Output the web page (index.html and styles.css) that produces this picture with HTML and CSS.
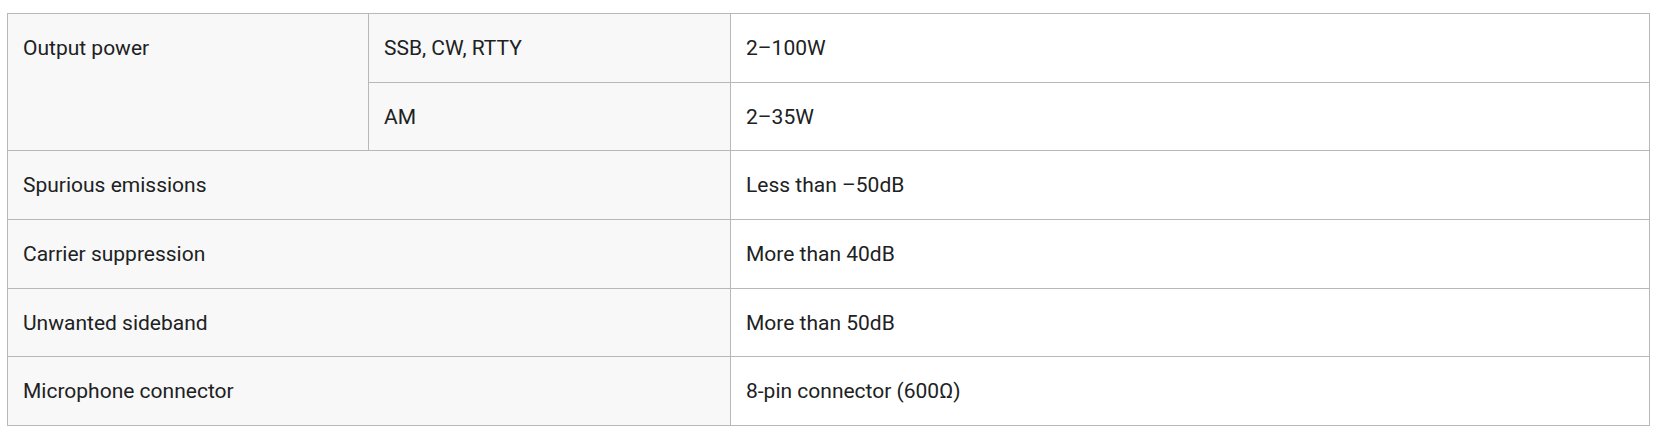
FILE: index.html
```html
<!DOCTYPE html>
<html lang="en">
<head>
<meta charset="utf-8">
<title>Specifications</title>
<link rel="stylesheet" href="styles.css">
</head>
<body>
<table class="spec">
  <colgroup>
    <col class="c1">
    <col class="c2">
    <col class="c3">
  </colgroup>
  <tbody>
    <tr>
      <th class="head top" rowspan="2">Output power</th>
      <th class="head">SSB, CW, RTTY</th>
      <td>2–100W</td>
    </tr>
    <tr>
      <th class="head">AM</th>
      <td>2–35W</td>
    </tr>
    <tr>
      <th class="head" colspan="2">Spurious emissions</th>
      <td>Less than –50dB</td>
    </tr>
    <tr>
      <th class="head" colspan="2">Carrier suppression</th>
      <td>More than 40dB</td>
    </tr>
    <tr>
      <th class="head" colspan="2">Unwanted sideband</th>
      <td>More than 50dB</td>
    </tr>
    <tr>
      <th class="head" colspan="2">Microphone connector</th>
      <td>8-pin connector (600Ω)</td>
    </tr>
  </tbody>
</table>
</body>
</html>
```
FILE: styles.css
```css
html, body {
  background: #ffffff;
}
body {
  margin: 13px 7px;
  font-family: Roboto, "Liberation Sans", Arial, sans-serif;
  font-size: 21px;
  color: #202122;
}
.spec {
  width: 1643px;
  border-collapse: collapse;
  table-layout: fixed;
}
.c1 { width: 361px; }
.c2 { width: 362px; }
.spec th,
.spec td {
  border: 1px solid #b8b8b8;
  padding: 20px 15px 19.67px;
  line-height: 28px;
  text-align: left;
  font-weight: 400;
  vertical-align: middle;
}
.spec .head {
  background: #f8f8f8;
}
.spec .top {
  vertical-align: top;
}
```
